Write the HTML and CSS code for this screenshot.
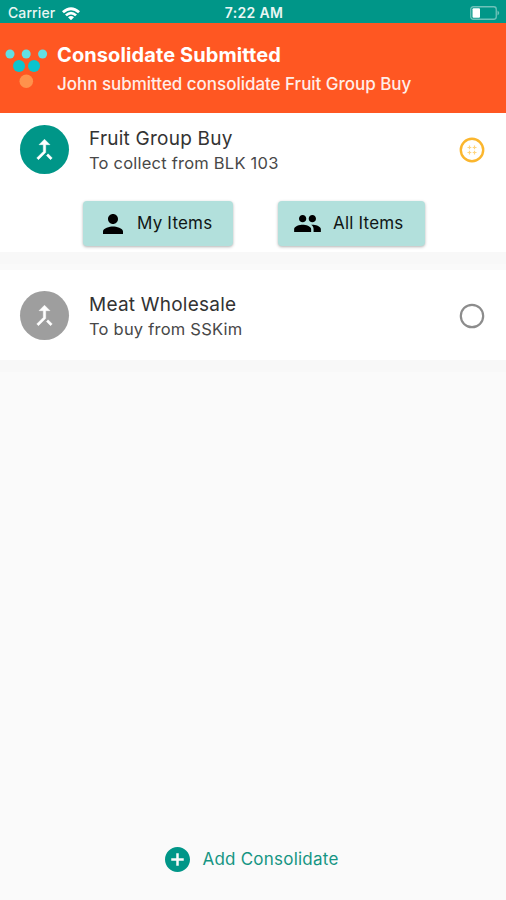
FILE: index.html
```html
<!DOCTYPE html>
<html lang="en">
<head>
<meta charset="utf-8">
<meta name="viewport" content="width=device-width, initial-scale=1">
<title>Consolidate</title>
<link rel="stylesheet" href="styles.css">
</head>
<body>
<div class="app">
  <header class="status">
    <div class="carrier"><span>Carrier</span>
      <svg class="wifi" viewBox="0 0 18 13"><path d="M0 4.3Q9-3.6 18 4.3L16.100 6.300Q9 .2 1.900 6.300ZM3 7.400Q9 2.300 15 7.400L13.100 9.300Q9 5.900 4.900 9.300ZM6 10.300Q9 7.900 12 10.300L9 13.200Z"/></svg>
    </div>
    <span class="time">7:22 AM</span>
    <svg class="battery" viewBox="0 0 30 14"><rect class="shell" x=".75" y=".75" width="25.500" height="12.500" rx="2.500"/><path class="tip" d="M27.500 4.500Q31 7 27.500 9.500Z"/><rect x="2.500" y="2.200" width="7.500" height="9.600" rx="1"/></svg>
  </header>
  <section class="banner">
    <svg class="logo" viewBox="0 0 44 40">
      <g class="dots-light"><circle cx="5" cy="5" r="4.500"/><circle cx="21.200" cy="5" r="4.500"/><circle cx="37.600" cy="5" r="4.500"/></g>
      <g class="dots-cyan"><circle cx="14" cy="17" r="6"/><circle cx="29" cy="17" r="6"/></g>
      <circle class="dot-orange" cx="21.300" cy="32.200" r="6.800"/>
    </svg>
    <div>
      <h1>Consolidate Submitted</h1>
      <p>John submitted consolidate Fruit Group Buy</p>
    </div>
  </section>
  <main>
    <article class="card">
      <div class="tile">
        <span class="avatar"><svg viewBox="0 0 24 24"><path d="M17 20.410 18.410 19 15 15.590 13.590 17 17 20.410zM7.500 8H11v5.590L5.590 19 7 20.410l6-6V8h3.500L12 3.500 7.500 8z"/></svg></span>
        <div class="text"><h2>Fruit Group Buy</h2><p>To collect from BLK 103</p></div>
        <svg class="state active" viewBox="0 0 26 26"><circle cx="13" cy="13" r="11.200"/><path d="M10.500 8.500v9M15.500 8.500v9M8.500 10.500h9M8.500 15.500h9"/></svg>
      </div>
      <div class="actions">
        <button class="mine"><svg viewBox="4 4 16 16"><path d="M12 12c2.210 0 4-1.790 4-4s-1.790-4-4-4-4 1.790-4 4 1.790 4 4 4zm0 2c-2.670 0-8 1.340-8 4v2h16v-2c0-2.660-5.330-4-8-4z"/></svg><span>My Items</span></button>
        <button class="all"><svg viewBox="1 5 22 14"><path d="M16 11c1.660 0 2.990-1.340 2.990-3S17.660 5 16 5s-3 1.340-3 3 1.340 3 3 3zm-8 0c1.660 0 2.990-1.340 2.990-3S9.660 5 8 5 5 6.340 5 8s1.340 3 3 3zm0 2c-2.330 0-7 1.170-7 3.500V19h14v-2.500c0-2.330-4.670-3.500-7-3.500zm8 0c-.29 0-.62.02-.97.05 1.160.84 1.970 1.970 1.970 3.450V19h6v-2.500c0-2.330-4.670-3.500-7-3.500z"/></svg><span>All Items</span></button>
      </div>
    </article>
    <article class="card idle">
      <div class="tile">
        <span class="avatar"><svg viewBox="0 0 24 24"><path d="M17 20.410 18.410 19 15 15.590 13.590 17 17 20.410zM7.500 8H11v5.590L5.590 19 7 20.410l6-6V8h3.500L12 3.500 7.500 8z"/></svg></span>
        <div class="text"><h2>Meat Wholesale</h2><p>To buy from SSKim</p></div>
        <svg class="state" viewBox="0 0 26 26"><circle cx="13" cy="13" r="11.200"/></svg>
      </div>
    </article>
  </main>
  <footer><button class="add"><svg viewBox="2 2 20 20"><path d="M12 2C6.480 2 2 6.480 2 12s4.480 10 10 10 10-4.480 10-10S17.520 2 12 2zm5 11h-4v4h-2v-4H7v-2h4V7h2v4h4v2z"/></svg><span>Add Consolidate</span></button></footer>
</div>
</body>
</html>
```
FILE: styles.css
```css
* { box-sizing: border-box; }
body, h1, h2, p { margin: 0; }
body { background: #fafafa; font-family: Inter, "Liberation Sans", sans-serif; }
.app { width: 506px; height: 900px; display: flex; flex-direction: column; overflow: hidden; }
svg { display: block; flex: none; fill: currentColor; }
button { border: 0; padding: 0; background: none; font: inherit; display: flex; align-items: center; white-space: nowrap; }

.status { height: 23px; background: #009688; color: #e9f6f4; display: grid; grid-template-columns: 1fr auto 1fr; align-items: center; padding: 3px 6px 0 8px; font-size: 14px; line-height: 20px; font-weight: 500; }
.carrier { display: flex; align-items: center; gap: 7px; letter-spacing: .1px; }
.wifi { width: 18px; height: 13px; color: #fff; }
.time { font-weight: 600; letter-spacing: .35px; }
.battery { width: 30px; height: 14px; justify-self: end; color: #fff; }
.shell { fill: none; stroke: #6fc2ba; stroke-width: 1.3; }
.tip { fill: #6fc2ba; }

.banner { height: 90px; background: #ff5722; color: #fff; display: flex; align-items: flex-start; padding: 18px 0 0 5px; gap: 8px; white-space: nowrap; }
.logo { width: 44px; height: 40px; margin-top: 8px; }
.dots-light { fill: #62dfe3; }
.dots-cyan { fill: #0bc4ce; }
.dot-orange { fill: #ff924c; }
.banner h1 { font-size: 20px; line-height: 28px; font-weight: 700; letter-spacing: .1px; }
.banner p { font-size: 17px; line-height: 24px; margin-top: 3px; color: #ffeee9; font-weight: 500; letter-spacing: -.03px; }

.card { height: 139px; background: #fff; color: #333; box-shadow: 0 12px 0 #f8f8f8; margin-bottom: 18px; padding: 12px 21px 0 20px; }
.idle { height: 90px; padding-top: 21px; }
.tile { display: flex; align-items: center; height: 49px; }
.avatar { width: 49px; height: 49px; border-radius: 50%; background: #009688; color: #fff; display: grid; place-items: center; margin-right: 20px; }
.avatar svg { width: 29px; height: 29px; stroke: #fff; stroke-width: .4; }
.idle .avatar { background: #9e9e9e; }
.text { flex: 1; white-space: nowrap; }
.text h2 { font-size: 19px; line-height: 26px; font-weight: 400; letter-spacing: .23px; margin-top: 1px; }
.text p { font-size: 16.5px; line-height: 24px; margin-top: -1px; color: #484848; letter-spacing: .22px; }
.state { width: 26px; height: 26px; }
.state circle { fill: none; stroke: #8c8c8c; stroke-width: 2.2; }
.active circle { stroke: #fbb62e; stroke-width: 2.4; }
.active path { fill: none; stroke: #ffd57f; stroke-width: 1.2; stroke-dasharray: 3.8 1.4; }

.actions { display: flex; gap: 45px; padding: 27px 0 0 63px; }
.actions button { height: 45px; background: #b2e0dc; border-radius: 4px; color: #101615; box-shadow: 0 1px 3px rgba(0,0,0,.3); font-size: 17px; letter-spacing: .2px; }
.actions span { margin-top: -2px; }
.mine { width: 150px; padding-left: 20px; }
.all { width: 147px; padding-left: 16px; }
.actions svg { color: #000; }
.mine svg { width: 20px; height: 20px; margin-right: 14px; }
.all svg { width: 27px; height: 17px; margin-right: 12px; }

footer { margin-top: auto; height: 82px; display: flex; justify-content: center; align-items: flex-start; padding: 28px 2px 0 0; }
.add { color: #159583; font-size: 17px; gap: 12px; line-height: 26px; letter-spacing: .23px; }
.add svg { width: 25px; height: 25px; color: #009688; }
```
